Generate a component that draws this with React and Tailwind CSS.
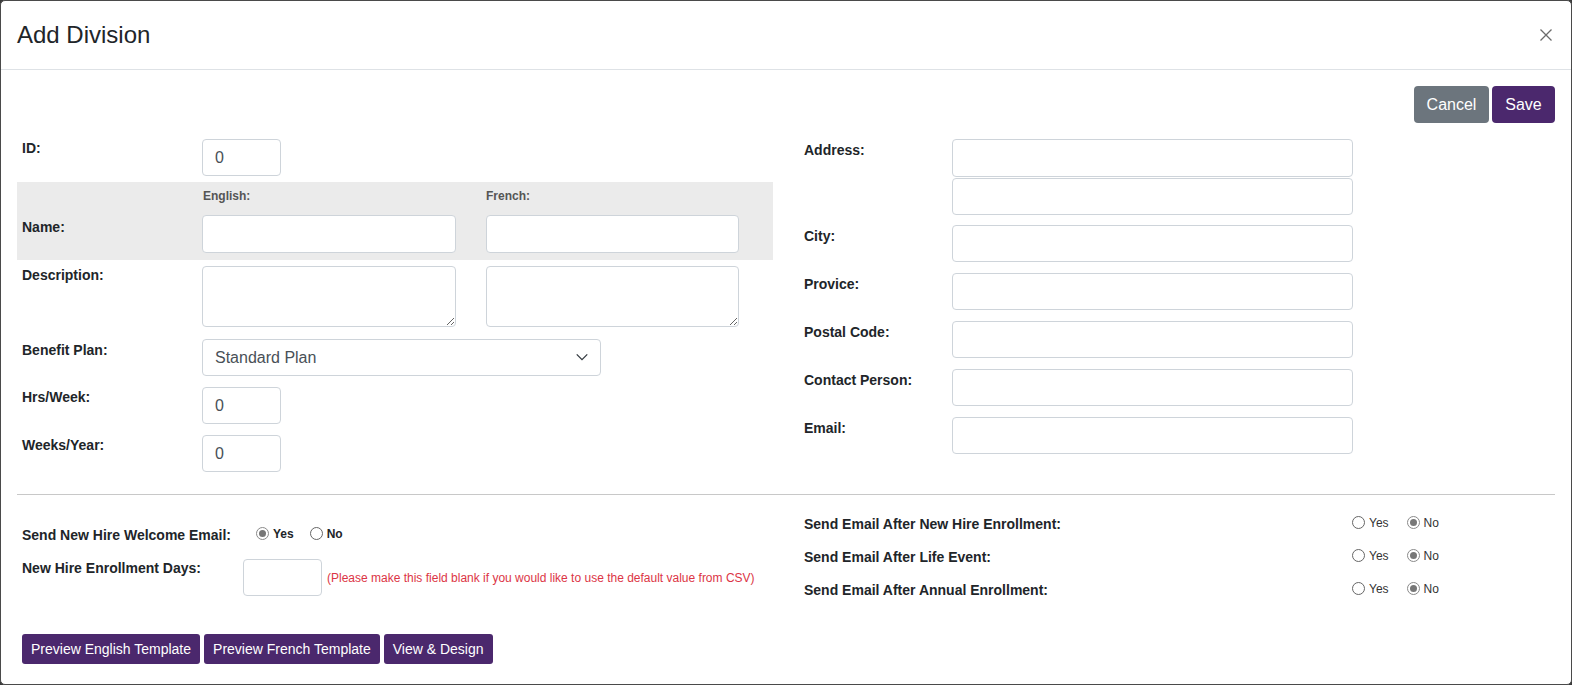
const inputCls = 'block bg-white border border-[#ced4da] rounded-[4px] px-3 text-[16px] text-[#495057] outline-none'
const labelCls = 'text-[14px] font-bold leading-[18px] text-[#212529]'

function Radio({ checked, label, bold }) {
  return (
    <label className="flex items-center">
      <span
        className={`w-[13px] h-[13px] rounded-full border flex items-center justify-center bg-white ${checked ? 'border-[#8a8a8a]' : 'border-[#666]'}`}
      >
        {checked && <span className="w-[7px] h-[7px] rounded-full bg-[#777]" />}
      </span>
      <span className={`ml-[4px] text-[12px] leading-[14px] ${bold ? 'font-bold text-[#212529]' : 'text-[#333]'}`}>{label}</span>
    </label>
  )
}

function RightField({ label, top = 'mt-[11px]', children }) {
  return (
    <div className={`flex items-start ${top}`}>
      <div className={`${labelCls} w-[148px] pt-[2px]`}>{label}</div>
      <div className="w-[401px]">{children}</div>
    </div>
  )
}

function EmailToggle({ label, first }) {
  return (
    <div className={`flex items-center h-[18px] ${first ? '' : 'mt-[15px]'}`}>
      <div className={`${labelCls} w-[548px]`}>{label}</div>
      <div className="flex items-center gap-[18px] -mt-[3px]">
        <Radio label="Yes" />
        <Radio label="No" checked />
      </div>
    </div>
  )
}

export default function App() {
  return (
    <div className="bg-[#3a3a3a] h-[685px]" style={{ fontFamily: '"Liberation Sans", Arial, sans-serif' }}>
      <div className="bg-white border border-[#4a4a4a] rounded-[5px] h-[685px] flex flex-col">
        {/* Header */}
        <div className="flex items-center justify-between pl-4 pr-[17px] py-4 border-b border-[#dee2e6]">
          <h4 className="text-[24px] leading-[36px] text-[#212529]">Add Division</h4>
          <button className="w-[16px] h-[16px] flex items-center justify-center">
            <svg width="12" height="12" viewBox="0 0 12 12">
              <path d="M0.5 0.5L11.5 11.5M11.5 0.5L0.5 11.5" stroke="#6b6b6b" strokeWidth="1.3" />
            </svg>
          </button>
        </div>

        {/* Body */}
        <div className="pl-4 pr-[16px] pt-4">
          <div className="flex justify-end gap-[3px]">
            <button className="h-[37px] w-[75px] rounded-[4px] bg-[#6c757d] text-white text-[16px]">Cancel</button>
            <button className="h-[37px] w-[63px] rounded-[4px] bg-[#4b286d] text-white text-[16px]">Save</button>
          </div>

          <div className="flex mt-[16px]">
            {/* Left column */}
            <div className="w-[756px]">
              <div className="flex items-start">
                <div className={`${labelCls} w-[185px] pl-[5px]`}>ID:</div>
                <input className={`${inputCls} w-[79px] h-[37px]`} defaultValue="0" />
              </div>

              <div className="flex items-start bg-[#ebebeb] mt-[6px] pt-[7px] pb-[7px]">
                <div className={`${labelCls} w-[185px] pl-[5px] pt-[29px]`}>Name:</div>
                <div className="w-[254px]">
                  <div className="text-[12px] font-bold text-[#555] leading-[14px] pl-[1px]">English:</div>
                  <input className={`${inputCls} w-[254px] h-[38px] mt-[12px]`} />
                </div>
                <div className="w-[253px] ml-[30px]">
                  <div className="text-[12px] font-bold text-[#555] leading-[14px]">French:</div>
                  <input className={`${inputCls} w-[253px] h-[38px] mt-[12px]`} />
                </div>
              </div>

              <div className="flex items-start mt-[6px]">
                <div className={`${labelCls} w-[185px] pl-[5px]`}>Description:</div>
                <textarea className={`${inputCls} w-[254px] h-[61px]`} />
                <textarea className={`${inputCls} w-[253px] h-[61px] ml-[30px]`} />
              </div>

              <div className="flex items-start mt-[12px]">
                <div className={`${labelCls} w-[185px] pl-[5px] pt-[2px]`}>Benefit Plan:</div>
                <div className="relative w-[399px]">
                  <select className={`${inputCls} w-[399px] h-[37px] appearance-none`} defaultValue="std">
                    <option value="std">Standard Plan</option>
                  </select>
                  <svg className="absolute right-[12px] top-[11px] pointer-events-none" width="14" height="14" viewBox="0 0 16 16">
                    <path d="M2 5l6 6 6-6" fill="none" stroke="#343a40" strokeWidth="1.5" />
                  </svg>
                </div>
              </div>

              <div className="flex items-start mt-[11px]">
                <div className={`${labelCls} w-[185px] pl-[5px] pt-[1px]`}>Hrs/Week:</div>
                <input className={`${inputCls} w-[79px] h-[37px]`} defaultValue="0" />
              </div>

              <div className="flex items-start mt-[11px]">
                <div className={`${labelCls} w-[185px] pl-[5px] pt-[1px]`}>Weeks/Year:</div>
                <input className={`${inputCls} w-[79px] h-[37px]`} defaultValue="0" />
              </div>
            </div>

            {/* Right column */}
            <div className="ml-[31px]">
              <RightField label="Address:" top="">
                <input className={`${inputCls} w-[401px] h-[38px]`} />
                <input className={`${inputCls} w-[401px] h-[37px] mt-[1px]`} />
              </RightField>
              <RightField label="City:" top="mt-[10px]">
                <input className={`${inputCls} w-[401px] h-[37px]`} />
              </RightField>
              <RightField label="Provice:">
                <input className={`${inputCls} w-[401px] h-[37px]`} />
              </RightField>
              <RightField label="Postal Code:">
                <input className={`${inputCls} w-[401px] h-[37px]`} />
              </RightField>
              <RightField label="Contact Person:">
                <input className={`${inputCls} w-[401px] h-[37px]`} />
              </RightField>
              <RightField label="Email:">
                <input className={`${inputCls} w-[401px] h-[37px]`} />
              </RightField>
            </div>
          </div>

          <div className="mt-[22px] border-t border-[#c8c8c8]" />

          <div className="flex">
            <div className="w-[787px]">
              <div className="flex items-center mt-[31px] h-[18px]">
                <div className={`${labelCls} w-[226px] pl-[5px]`}>Send New Hire Welcome Email:</div>
                <div className="flex items-center gap-[16px] ml-[13px] -mt-[3px]">
                  <Radio label="Yes" checked bold />
                  <Radio label="No" bold />
                </div>
              </div>
              <div className="flex items-start mt-[15px]">
                <div className={`${labelCls} w-[226px] pl-[5px]`}>New Hire Enrollment Days:</div>
                <input className={`${inputCls} w-[79px] h-[37px]`} />
                <div className="ml-[5px] self-center text-[12px] text-[#dc3545]">
                  (Please make this field blank if you would like to use the default value from CSV)
                </div>
              </div>
            </div>

            <div className="mt-[20px]">
              <EmailToggle label="Send Email After New Hire Enrollment:" first />
              <EmailToggle label="Send Email After Life Event:" />
              <EmailToggle label="Send Email After Annual Enrollment:" />
            </div>
          </div>

          <div className="flex gap-[4px] mt-[35px] pl-[5px]">
            <button className="h-[30px] px-[9px] rounded-[3px] bg-[#4b286d] text-white text-[14px]">Preview English Template</button>
            <button className="h-[30px] px-[9px] rounded-[3px] bg-[#4b286d] text-white text-[14px]">Preview French Template</button>
            <button className="h-[30px] px-[9px] rounded-[3px] bg-[#4b286d] text-white text-[14px]">View &amp; Design</button>
          </div>
        </div>
      </div>
    </div>
  )
}
